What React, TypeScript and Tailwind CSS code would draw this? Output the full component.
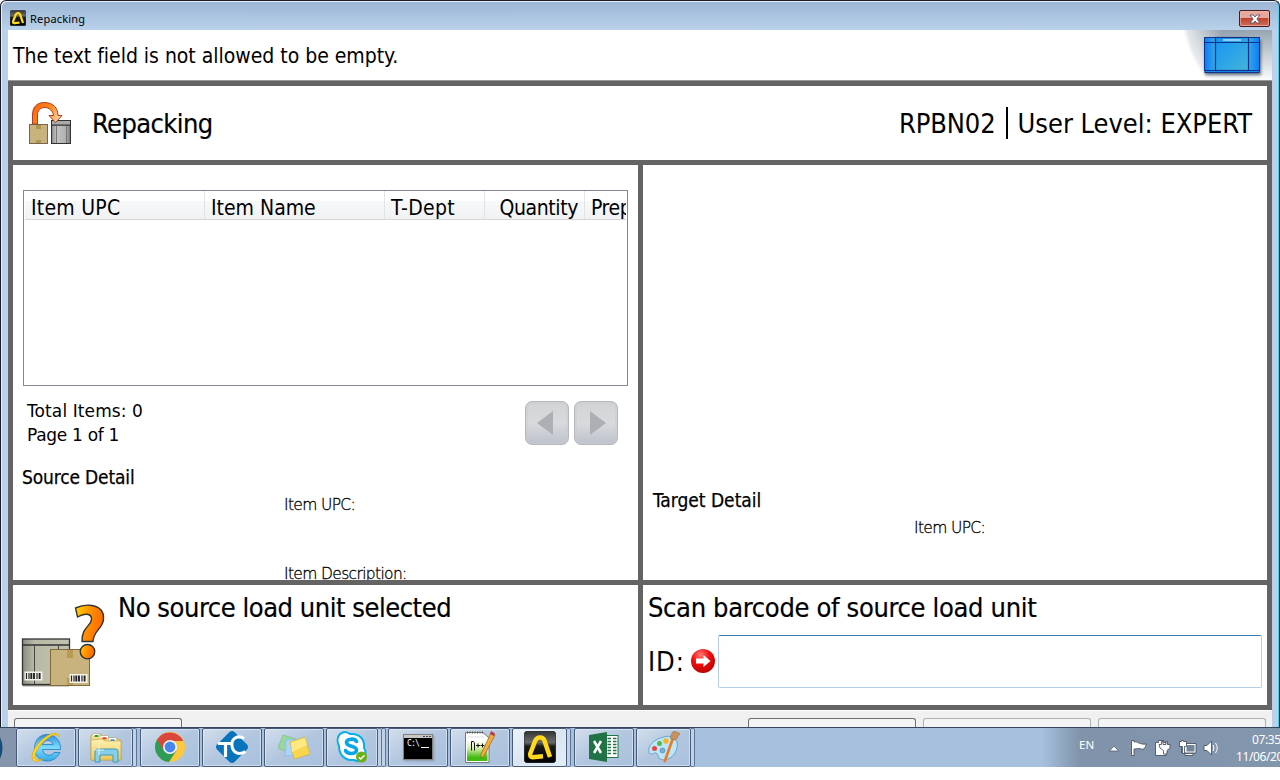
import type { ReactNode } from 'react';

const UI = "font-['DejaVu_Sans_Condensed','DejaVu_Sans',sans-serif] [font-stretch:condensed]";
const LIGHT = "font-['DejaVu_Sans_Light','DejaVu_Sans_Condensed',sans-serif] font-extralight [font-stretch:normal] text-[15.5px] leading-[18px] tracking-[-0.65px] whitespace-nowrap [-webkit-text-stroke:0.3px]";

function AppLogo({ className }: { className: string }) {
  return (
    <svg viewBox="0 0 32 32" className={className}>
      <defs>
        <linearGradient id="logoBg" x1="0" y1="0" x2="0" y2="1">
          <stop offset="0" stopColor="#333" />
          <stop offset="0.35" stopColor="#6a6a6a" />
          <stop offset="0.48" stopColor="#1a1a1a" />
          <stop offset="1" stopColor="#000" />
        </linearGradient>
      </defs>
      <rect x="0.3" y="0.3" width="31.4" height="31.4" rx="3" fill="url(#logoBg)" stroke="#000" strokeWidth="0.6" />
      <path d="M19 25.3 L8.5 26.3 Q5.5 26 6.3 22.5 L11.3 9.5 Q13 6.3 16 6.4 Q19 6.3 20.3 9.2 L26 26" fill="none" stroke="#ffd91c" strokeWidth="4.5" strokeLinejoin="round" />
    </svg>
  );
}

function RepackIcon() {
  return (
    <svg viewBox="0 0 44 44" className="h-11 w-11">
      <defs>
        <linearGradient id="arc" x1="0" y1="0" x2="1" y2="0.5">
          <stop offset="0" stopColor="#ff5a00" />
          <stop offset="0.6" stopColor="#ff8a20" />
          <stop offset="1" stopColor="#ffd09a" />
        </linearGradient>
        <linearGradient id="bin" x1="0" y1="0" x2="1" y2="0">
          <stop offset="0" stopColor="#888" />
          <stop offset="0.25" stopColor="#c4c4c4" />
          <stop offset="0.75" stopColor="#b0b0b0" />
          <stop offset="1" stopColor="#777" />
        </linearGradient>
      </defs>
      <rect x="1.5" y="23.5" width="18" height="19" fill="#c8b37e" stroke="#77664a" />
      <path d="M8 24h5v4h-5zM8 39h5v3h-5z" fill="#ae9650" />
      <rect x="23.5" y="24" width="19" height="18.5" fill="url(#bin)" stroke="#333" />
      <rect x="23.5" y="19.5" width="19" height="4.5" fill="#aaa" stroke="#333" />
      <path d="M28.5 25V42M38.5 25V42" stroke="#777" />
      <path d="M4.5 23 V14 C4.5 5 10 1.5 16.5 1.5 C25 1.5 30 7 30 14.5 H34 L27.5 21.5 L21 14.5 H25.5 C25 10 21 6.5 17 6.5 C12 6.5 9.5 10 9.5 14 V23 Z" fill="url(#arc)" stroke="#a4402c" />
    </svg>
  );
}

function ToteIcon() {
  return (
    <svg viewBox="0 0 96 50" className="h-[50px] w-24">
      <defs>
        <linearGradient id="shade" x1="0.5" y1="0" x2="0.6" y2="1">
          <stop offset="0" stopColor="#8797a6" />
          <stop offset="0.55" stopColor="#c9d0d7" />
          <stop offset="1" stopColor="#fff" />
        </linearGradient>
        <linearGradient id="fade" x1="0" y1="0" x2="1" y2="0">
          <stop offset="0" stopColor="#fff" />
          <stop offset="0.45" stopColor="#fff" stopOpacity="0" />
        </linearGradient>
        <linearGradient id="tote" x1="0" y1="0" x2="1" y2="1">
          <stop offset="0" stopColor="#1793f5" />
          <stop offset="1" stopColor="#43b4d8" />
        </linearGradient>
        <linearGradient id="toteEnds" x1="0" y1="0" x2="1" y2="0">
          <stop offset="0" stopColor="#087cff" />
          <stop offset="0.2" stopColor="#39a7e0" />
          <stop offset="0.8" stopColor="#39a7e0" />
          <stop offset="1" stopColor="#087cff" />
        </linearGradient>
        <filter id="soft"><feGaussianBlur stdDeviation="1.5" /></filter>
      </defs>
      <path d="M7 -6 C13 16 18 38 40 54 H104 V-6 Z" fill="url(#shade)" filter="url(#soft)" />
      <path d="M0 -6 V54 H104 V-6 Z" fill="url(#fade)" />
      <rect x="29" y="10" width="56" height="35" fill="#304358" opacity="0.75" filter="url(#soft)" />
      <rect x="29" y="40" width="54" height="2.5" fill="#168cf5" stroke="#12338c" />
      <rect x="28.5" y="7.5" width="55" height="33" fill="url(#toteEnds)" stroke="#12338c" />
      <rect x="39.5" y="7.5" width="33" height="33" fill="url(#tote)" stroke="#12338c" strokeWidth="1.2" />
      <path d="M28.5 12.5H83.5" stroke="#12338c" />
      <rect x="47" y="9" width="18" height="2" fill="#8fd0f4" />
    </svg>
  );
}

function Barcode({ x, y }: { x: number; y: number }) {
  return (
    <g>
      <rect x={x - 0.5} y={y - 0.5} width="18" height="9" fill="#f4f4ee" />
      <path d={`M${x + 1.5} ${y + 1}v6M${x + 4} ${y + 1}v6M${x + 12} ${y + 1}v6`} stroke="#222" strokeWidth="1.2" />
      <path d={`M${x + 6.3} ${y + 1}v6M${x + 9} ${y + 1}v6M${x + 14.6} ${y + 1}v6`} stroke="#222" strokeWidth="1.9" />
    </g>
  );
}

function UnknownUnitIcon() {
  return (
    <svg viewBox="0 0 86 86" className="h-[86px] w-[86px]">
      <defs>
        <linearGradient id="mark" x1="0" y1="0" x2="1" y2="0.3">
          <stop offset="0" stopColor="#ffd800" />
          <stop offset="0.5" stopColor="#ff9300" />
          <stop offset="1" stopColor="#ff6a00" />
        </linearGradient>
        <linearGradient id="crate" x1="0" y1="0" x2="1" y2="0">
          <stop offset="0" stopColor="#8b8c80" />
          <stop offset="0.25" stopColor="#b9b9a6" />
          <stop offset="1" stopColor="#c2c2af" />
        </linearGradient>
      </defs>
      <rect x="2" y="83" width="46" height="2" fill="#a4a491" stroke="#444" strokeWidth="0.5" />
      <rect x="1.5" y="38" width="47" height="45.5" fill="url(#crate)" stroke="#333" strokeWidth="1.3" />
      <path d="M1 44H49" stroke="#333" strokeWidth="1.4" />
      <path d="M13.5 44V83M37.5 44V49" stroke="#444" />
      <rect x="29.5" y="48.5" width="39" height="36" fill="#c8b37e" stroke="#806b3e" />
      <path d="M46 49h6v8h-6zM46 77h6v7h-6z" fill="#b89a52" />
      <Barcode x={4} y={71} />
      <Barcode x={49} y={73.5} />
      <path d="M54.5 7 C60 4.5 66 3.5 71 4.5 C79 6 83 11 82.5 18 C82 28 72.5 29 72 40.500 H61 C60.5 26 70.5 25 70.5 18 C70.5 12 63 12 56.5 16 Z" fill="url(#mark)" stroke="#333" strokeWidth="1.4" />
      <circle cx="66.500" cy="50.700" r="7.200" fill="url(#mark)" stroke="#333" strokeWidth="1.4" />
    </svg>
  );
}

function ErrorArrow() {
  return (
    <svg viewBox="0 0 24 24" className="mb-[2px] ml-[6px] h-6 w-6 shrink-0">
      <defs>
        <radialGradient id="red" cx="0.4" cy="0.25" r="0.8">
          <stop offset="0" stopColor="#ff7a70" />
          <stop offset="0.45" stopColor="#f21010" />
          <stop offset="1" stopColor="#b80000" />
        </radialGradient>
      </defs>
      <circle cx="12" cy="12" r="12" fill="url(#red)" />
      <path d="M5 9.5h7.5V6l7 6-7 6v-3.5H5z" fill="#fff" />
    </svg>
  );
}

function PageButton({ dir }: { dir: 'prev' | 'next' }) {
  return (
    <button className="flex h-11 w-11 items-center justify-center rounded-[7px] border border-[#b5b8bf] bg-linear-to-b from-[#d2d3d5] via-[#d9dadc] to-[#bcc1cc] shadow-[inset_0_0_0_2px_#c9cbd080]">
      <svg viewBox="0 0 44 44" className="h-11 w-11 shrink-0">
        <path d={dir === 'prev' ? 'M28 10V34L12 22Z' : 'M16 10V34L32 22Z'} fill="#aeafb5" />
      </svg>
    </button>
  );
}

const glyph = 'h-8 w-8 shrink-0';

function IeGlyph() {
  return (
    <svg viewBox="0 0 32 32" className={glyph}>
      <defs>
        <linearGradient id="ie" x1="0" y1="0" x2="0" y2="1">
          <stop offset="0" stopColor="#2b8edb" />
          <stop offset="0.5" stopColor="#7ddcff" />
          <stop offset="1" stopColor="#2fa9e8" />
        </linearGradient>
      </defs>
      <path d="M17 3.5C25 3.5 31 9 30.5 18.5H12.5C13 25 22 26 24 21.5H30C27 27 23 30 17.5 30C9 30 4.5 24 4.5 17C4.5 9 10 3.5 17 3.5ZM12.5 13.5H23C22 8 14 8 12.5 13.5Z" fill="url(#ie)" stroke="#237fba" strokeWidth="0.8" />
      <path d="M29 6C30 1 22 1 14 7C5 14 0 24 3 29C5 32 10 30 14 27C8 30 5 29 5 26C5 20 11 12 18 7C23 3.5 28 2.5 29 6Z" fill="#ffd51c" stroke="#d99a00" strokeWidth="0.5" />
    </svg>
  );
}

function FolderGlyph() {
  return (
    <svg viewBox="0 0 32 32" className={glyph}>
      <defs>
        <linearGradient id="folder" x1="0" y1="0" x2="0" y2="1">
          <stop offset="0" stopColor="#fff2b4" />
          <stop offset="1" stopColor="#ebc858" />
        </linearGradient>
      </defs>
      <path d="M1 5L3 3H11V5H18V7H26L31 10V29H1Z" fill="#f3dc91" stroke="#b7973b" strokeWidth="0.7" />
      <path d="M3 4h6M11 6h7M19 8h7" stroke="#fff" strokeWidth="2" />
      <path d="M4.5 5h4" stroke="#30a632" strokeWidth="2" />
      <path d="M12.5 7.3h4" stroke="#d83b28" strokeWidth="2" />
      <path d="M20.5 9.3h4" stroke="#2d8be0" strokeWidth="2" />
      <path d="M1 9L12 8L15 10H31V29H1Z" fill="url(#folder)" stroke="#c4a34a" strokeWidth="0.7" />
      <path d="M5 31V20Q5 18 8 18H25Q28 18 28 20V31H23V24H10V31Z" fill="#87cfe9" stroke="#3e96bb" />
      <path d="M9 14v10M4 19h10" stroke="#fff" strokeWidth="0.7" />
    </svg>
  );
}

function ChromeGlyph() {
  return (
    <svg viewBox="0 0 32 32" className={glyph}>
      <circle cx="16" cy="16" r="15" fill="#fcc83d" />
      <path d="M16 16L3 8.5A15 15 0 0 0 15 31L22.5 19.5Z" fill="#2e9c57" />
      <path d="M3 8.5A15 15 0 0 1 29.3 10H16L9.5 19Z" fill="#da483b" />
      <circle cx="16" cy="16" r="7" fill="#f5f5f5" />
      <circle cx="16" cy="16" r="5.4" fill="#4886ed" />
    </svg>
  );
}

function TcGlyph() {
  return (
    <svg viewBox="0 0 32 32" className={glyph}>
      <path d="M13.5 1Q16 -1 18.5 1L31 13.5Q33 16 31 18.5L18.5 31Q16 33 13.5 31L1 18.5Q-1 16 1 13.5Z" fill="#0874bb" />
      <path d="M2 12.5H16M9.5 13V26" stroke="#fff" strokeWidth="3.2" fill="none" />
      <path d="M28 7.5C20 3 15 9 16 15C17 22 23 24.5 29.5 20.5" stroke="#fff" strokeWidth="3" fill="none" />
    </svg>
  );
}

function NotesGlyph() {
  return (
    <svg viewBox="0 0 32 32" className={glyph}>
      <path d="M5 4L18 8L12 22L0 17Z" fill="#98d7a0" stroke="#6fbe82" strokeWidth="0.6" />
      <path d="M8 9L20 8L20 24L7 25Z" fill="#aad4fb" stroke="#83b8e8" strokeWidth="0.6" />
      <path d="M12 11L27 6L32 23L16 28Z" fill="#f8d64e" stroke="#d3b137" strokeWidth="0.7" />
      <path d="M13 11.5L27 7L29 14L14 21Z" fill="#ffe982" />
    </svg>
  );
}

function SkypeGlyph() {
  return (
    <svg viewBox="0 0 32 32" className={glyph}>
      <path d="M4 3C8 0 12 1 14 3C23 2 29 8 28 17C31 21 29 27 26 29C23 31 20 30 18 29C9 30 3 24 3 15C1 11 1 6 4 3Z" fill="#fff" stroke="#08aeea" strokeWidth="2" />
      <path d="M20.5 10.5C19 7 10.5 7.5 10.5 11.5C10.5 16 20.5 14.5 20.5 19C20.5 23.5 11 23.5 9.5 19.5" fill="none" stroke="#08a6e6" strokeWidth="3.6" strokeLinecap="round" />
      <circle cx="25.5" cy="26" r="5.5" fill="#6ab014" />
      <path d="M22.8 26.2L24.8 28L28.5 24.2" fill="none" stroke="#fff" strokeWidth="1.4" />
    </svg>
  );
}

function ConsoleGlyph() {
  return (
    <div className="flex h-[26px] w-[30px] flex-col border border-[#828282] bg-black shadow-[1px_1px_2px_#5556]">
      <div className="flex h-[3px] items-center justify-end gap-px bg-[#c7c7c7] pr-px">
        <i className="h-px w-0.5 bg-[#444]" />
        <i className="h-px w-0.5 bg-[#444]" />
        <i className="h-px w-0.5 bg-[#444]" />
      </div>
      <div className="flex pt-[2px] pl-[3px]">
        <span className="font-['DejaVu_Sans_Mono',monospace] text-[8px] leading-[8px] tracking-[-0.8px] text-white">C:\</span>
        <i className="mt-[7px] ml-0.5 h-px w-2 bg-white" />
      </div>
    </div>
  );
}

function NotepadGlyph() {
  return (
    <svg viewBox="0 0 32 32" className={glyph}>
      <defs>
        <linearGradient id="npp" x1="0" y1="0" x2="0" y2="1">
          <stop offset="0.1" stopColor="#fff" />
          <stop offset="0.45" stopColor="#d3eda9" />
          <stop offset="0.85" stopColor="#42bb10" />
        </linearGradient>
      </defs>
      <path d="M1.5 1.5H19L25 7V31.5H1.5Z" fill="#fff" stroke="#777" />
      <rect x="3" y="7" width="20.5" height="23" fill="url(#npp)" />
      <path d="M3 1.5H20" stroke="#555" strokeWidth="2" strokeDasharray="1 1.5" />
      <path d="M4 6h16" stroke="#bbb" strokeWidth="0.5" />
      <path d="M7.5 19.5V10.5H9.5Q10.5 11 10.5 13V19.5M12 14.5h4M14 12.5v4M16.5 14.5h4M18.5 12.5v4" stroke="#111" fill="none" />
      <path d="M27 2L31 4L20 25L17 27L17 23Z" fill="#f4ad3a" stroke="#955f24" strokeWidth="0.7" />
      <path d="M27 0L31 2.5L30 5L26 3Z" fill="#b13b4b" />
    </svg>
  );
}

function ExcelGlyph() {
  return (
    <svg viewBox="0 0 32 32" className={glyph}>
      <rect x="17" y="4.5" width="13" height="22" fill="#fff" stroke="#217346" />
      <path d="M19.5 7.5h3.5M25 7.5h3.5M19.5 10.5h3.5M25 10.5h3.5M19.5 13.5h3.5M25 13.5h3.5M19.5 16.5h3.5M25 16.5h3.5M19.5 19.5h3.5M25 19.5h3.5M19.5 22.5h3.5M25 22.5h3.5" stroke="#217346" strokeWidth="1.5" />
      <path d="M1 4L19 1V31L1 28Z" fill="#217346" />
      <path d="M6 10L13 22M13 10L6 22" stroke="#fff" strokeWidth="2.5" />
    </svg>
  );
}

function PaintGlyph() {
  return (
    <svg viewBox="0 0 32 32" className={glyph}>
      <path d="M16 6C25 3 31 9 29 17C27 26 18 31 12 28C9 26 11 23 8 22C6 21 4 25 1 22C-1 15 6 8 16 6Z" fill="#bee5f8" stroke="#6ca5c9" />
      <circle cx="6.5" cy="17.5" r="2.5" fill="#e5483e" />
      <circle cx="11.5" cy="12.5" r="2.5" fill="#5bb748" />
      <circle cx="18" cy="10" r="2.7" fill="#f5b521" />
      <circle cx="14.5" cy="19.5" r="2.5" fill="#79add2" stroke="#4d88b3" strokeWidth="0.6" />
      <path d="M16.5 31L25 7" stroke="#e87b24" strokeWidth="2.6" />
      <path d="M22 7C24 4 23 1 26 0.5C29 0.5 31 2 32 3C29.5 4 30 9 26 9Z" fill="#c5935d" stroke="#926437" strokeWidth="0.5" />
    </svg>
  );
}

function Task({ children, stack = 0, active = false }: { children: ReactNode; stack?: number; active?: boolean }) {
  const face = active
    ? 'from-[#eef3fa] via-[#dbe5f2] to-[#e3edf8]'
    : 'from-[#d3deec] via-[#b2c6df] to-[#a9c1de]';
  const width = stack === 2 ? 'w-[52px]' : stack === 1 ? 'w-[55px]' : 'w-[60px]';
  return (
    <div className="mr-0.5 flex h-[39px] w-[60px] shrink-0">
      <div className={`flex ${width} shrink-0 items-center justify-center rounded-[2px] border border-[#475c78] bg-linear-to-br pb-px ${face} shadow-[inset_0_0_0_1px_#e3edf8a0]`}>
        {children}
      </div>
      {stack > 0 && <div className="w-1 rounded-r-[2px] border-y border-r border-[#5c7595] bg-[#bfd2e8]" />}
      {stack > 1 && <div className="w-1 rounded-r-[2px] border-y border-r border-[#5c7595] bg-[#bfd2e8]" />}
    </div>
  );
}

function Tray() {
  return (
    <svg viewBox="0 0 112 20" className="mt-[10px] ml-[9px] h-5 w-28 shrink-0">
      <path d="M3.5 13L8 8L12.5 13Z" fill="#fff" stroke="#405069" strokeWidth="0.7" />
      <g fill="#fff" stroke="#3a475a" strokeWidth="0.8">
        <path d="M25.5 2.5H28V4C32 3 33 7 40.5 6C39 9 39 12 35 11C32 10 31 11 28 11V17.5H25.5Z" />
        <path d="M49.5 4.5H52.5V2.5H57.5V4.5H60V17.5H49.5Z" />
        <path d="M53 6.500H55.500V3.500H57V6.500H60V3.500H61.500V6.500H64V10L61 12.500V16H57.500V12.500L54 10Z" />
        <path d="M75.500 5.500H90V15H75.500Z" />
        <path d="M79 15.500h8v2h-8z" />
        <path d="M73.5 3.500h2v-1h2v1h3v5h-2v7h-2v-7h-3z" />
      </g>
      <path d="M80.500 7h8v6.500h-8z" fill="#71849b" />
      <path d="M98 7.500H101L105.5 3V17L101 12.500H98Z" fill="#fff" stroke="#3a475a" strokeWidth="0.8" />
      <path d="M107 7Q109 10 107 13M109.500 5Q113 10 109.500 15" fill="none" stroke="#fff" />
    </svg>
  );
}

function ActionButton({ muted = false, className = '' }: { muted?: boolean; className?: string }) {
  return (
    <div className={`h-3 w-[168px] shrink-0 rounded-t-[3px] border border-b-0 bg-[#f4f4f4] ${muted ? 'border-[#adb2b5]' : 'border-[#707070]'} ${className}`} />
  );
}

function ColumnHead({ children, className }: { children: ReactNode; className: string }) {
  return (
    <div className={`h-full shrink-0 overflow-hidden border-r border-[#e2e3e5] pl-[6px] leading-[35px] whitespace-nowrap ${className}`}>
      {children}
    </div>
  );
}

export default function App() {
  return (
    <div className={`flex h-[780px] w-[1280px] flex-col overflow-hidden bg-white text-black ${UI}`}>
      <div className="flex h-[727px] flex-col overflow-hidden rounded-t-[6px] border-t border-r border-l border-[#1c1c24] bg-linear-to-b from-[#9bb5d3] via-[#b9d1ea] via-[29px] to-[#b9d1ea] pr-[7px] pl-[7px] shadow-[inset_1px_1px_0_#e5eff9,inset_-1px_0_0_#44d3ee]">
        <header className="flex h-[29px] shrink-0 items-start pl-0.5">
          <AppLogo className="mt-[9px] h-4 w-4" />
          <span className="mt-[9px] ml-1 font-['Noto_Sans',sans-serif] text-[11px] leading-[18px] tracking-[0.2px]">Repacking</span>
          <button className="mt-[9px] mr-0.5 ml-auto flex h-[17px] w-[31px] items-center justify-center rounded-[2px] border border-[#4a1922] bg-linear-to-b from-[#e7a89c] from-45% via-[#c0422c] via-50% to-[#cf6f57] shadow-[inset_0_0_0_1px_#f0bbb0a0]">
            <svg viewBox="0 0 12 10" className="h-[10px] w-3">
              <path d="M1 1H4.3L6 3L7.7 1H11L7.9 5L11 9H7.7L6 7L4.3 9H1L4.1 5Z" fill="#fff" stroke="#53526a" strokeWidth="0.9" />
            </svg>
          </button>
        </header>

        <div className="flex h-[50px] shrink-0 items-start justify-between bg-white pl-[5px]">
          <p className="text-[21px] leading-[52px] tracking-[-0.02px]">The text field is not allowed to be empty.</p>
          <ToteIcon />
        </div>

        <main className="flex h-[630px] shrink-0 flex-col gap-[5px] border-t border-[#999] bg-[#646464] px-[5px] pt-[5px] pb-[5px]">
          <section className="flex h-[74px] shrink-0 items-center justify-between bg-white pr-[15px] pl-[15px]">
            <div className="flex items-center">
              <RepackIcon />
              <h1 className="mt-[2px] ml-5 text-[27px] leading-[72px] tracking-[-0.6px] [-webkit-text-stroke:0.2px]">Repacking</h1>
            </div>
            <div className="flex items-center text-[27px] leading-[72px]">
              <span className="mt-[2px] tracking-[-0.1px]">RPBN02</span>
              <span className="mr-[10px] ml-[10px] h-8 w-0.5 bg-black" />
              <span className="mt-[2px] tracking-[-0.02px]">User Level: EXPERT</span>
            </div>
          </section>

          <div className="flex h-[415px] shrink-0 gap-[5px]">
            <section className="flex w-[625px] shrink-0 flex-col overflow-hidden bg-white pl-[9px]">
              <div className="mt-[25px] ml-px h-[196px] w-[605px] shrink-0 border border-[#828790]">
                <div className="mx-px flex h-[29px] overflow-hidden border-b border-[#d5d5d5] bg-linear-to-b from-white from-35% via-[#f7f8fa] via-36% to-[#f1f2f4] text-[21px]">
                  <ColumnHead className="w-[180px] tracking-[0.25px]">Item UPC</ColumnHead>
                  <ColumnHead className="w-[180px]">Item Name</ColumnHead>
                  <ColumnHead className="w-[100px] tracking-[0.35px]">T-Dept</ColumnHead>
                  <ColumnHead className="w-[100px] pr-[6px] text-right tracking-[-0.4px]">Quantity</ColumnHead>
                  <ColumnHead className="w-[42px] border-r-0 tracking-[-0.4px]">Prep</ColumnHead>
                </div>
              </div>
              <div className="mt-[13px] flex shrink-0 justify-between pr-5 pl-[5px]">
                <div className="font-['DejaVu_Sans',sans-serif] text-[17px] leading-6 [font-stretch:normal]">
                  <p className="tracking-[0.1px]">Total Items: 0</p>
                  <p className="tracking-[-0.3px]">Page 1 of 1</p>
                </div>
                <div className="mt-0.5 flex gap-[5px]">
                  <PageButton dir="prev" />
                  <PageButton dir="next" />
                </div>
              </div>
              <h2 className="mt-[18px] shrink-0 text-[19px] leading-6 tracking-[-0.15px] [-webkit-text-stroke:0.25px]">Source Detail</h2>
              <p className={`mt-[7px] ml-[262px] shrink-0 ${LIGHT}`}>Item UPC:</p>
              <p className={`mt-[51px] ml-[262px] shrink-0 ${LIGHT}`}>Item Description:</p>
            </section>
            <section className="flex w-[624px] shrink-0 flex-col bg-white pt-[323px] pl-[9px]">
              <h2 className="pl-px text-[19px] leading-6 [-webkit-text-stroke:0.25px]">Target Detail</h2>
              <p className={`mt-[7px] ml-[262px] ${LIGHT}`}>Item UPC:</p>
            </section>
          </div>

          <div className="flex h-[120px] shrink-0 gap-[5px]">
            <section className="flex w-[625px] shrink-0 bg-white pt-[5px] pl-2">
              <div className="mt-[11px] shrink-0">
                <UnknownUnitIcon />
              </div>
              <p className="mt-px ml-[11px] text-[27px] leading-[34px] tracking-[-0.46px] [-webkit-text-stroke:0.2px]">No source load unit selected</p>
            </section>
            <section className="w-[624px] shrink-0 bg-white pt-[6px] pl-[5px]">
              <p className="text-[27px] leading-[34px] tracking-[-0.33px] [-webkit-text-stroke:0.2px]">Scan barcode of source load unit</p>
              <label className="mt-[10px] flex items-center">
                <span className="w-[37px] pt-0.5 text-[27px] tracking-[0.9px] whitespace-nowrap">ID:</span>
                <ErrorArrow />
                <input className="ml-[3px] h-[53px] w-[544px] rounded-[2px] border border-[#b5cfe7] border-t-[#3d7bad] bg-white outline-none" />
              </label>
            </section>
          </div>
        </main>

        <footer className="flex h-[17px] shrink-0 items-start border-t border-[#fff] bg-[#f0f0f0] px-[6px] pt-[7px]">
          <ActionButton />
          <ActionButton className="ml-auto" />
          <ActionButton muted className="ml-[7px]" />
          <ActionButton muted className="ml-[7px]" />
        </footer>
      </div>

      <nav className="flex h-10 shrink-0 overflow-hidden border-t border-[#34475f] bg-[#a6c0dd] font-['Noto_Sans',sans-serif] text-white">
        <div className="flex w-4 shrink-0 items-center bg-[#8495ac]">
          <svg viewBox="0 0 3 22" className="h-[22px] w-[3px]">
            <path d="M0 0Q5 11 0 22Z" fill="#164e79" />
          </svg>
        </div>
        <Task><IeGlyph /></Task>
        <Task stack={1}><FolderGlyph /></Task>
        <Task><ChromeGlyph /></Task>
        <Task><TcGlyph /></Task>
        <Task><NotesGlyph /></Task>
        <Task stack={2}><SkypeGlyph /></Task>
        <Task><ConsoleGlyph /></Task>
        <Task><NotepadGlyph /></Task>
        <Task stack={1} active><AppLogo className={glyph} /></Task>
        <Task><ExcelGlyph /></Task>
        <Task stack={1}><PaintGlyph /></Task>
        <div className="ml-auto flex w-[250px] shrink-0 overflow-hidden bg-linear-to-r from-[#a6c0dd] from-5% via-[#8093aa] via-20% to-[#8296ae]">
          <span className="mt-2 ml-[49px] w-[18px] shrink-0 text-[11.5px] leading-[18px]">EN</span>
          <Tray />
          <div className="w-[62px] shrink-0 overflow-hidden pt-[3px] pl-[18px] text-[12px] leading-[17px] tracking-[-0.4px] whitespace-nowrap">
            <p className="pl-4">07:35</p>
            <p>11/06/20</p>
          </div>
        </div>
      </nav>
    </div>
  );
}
